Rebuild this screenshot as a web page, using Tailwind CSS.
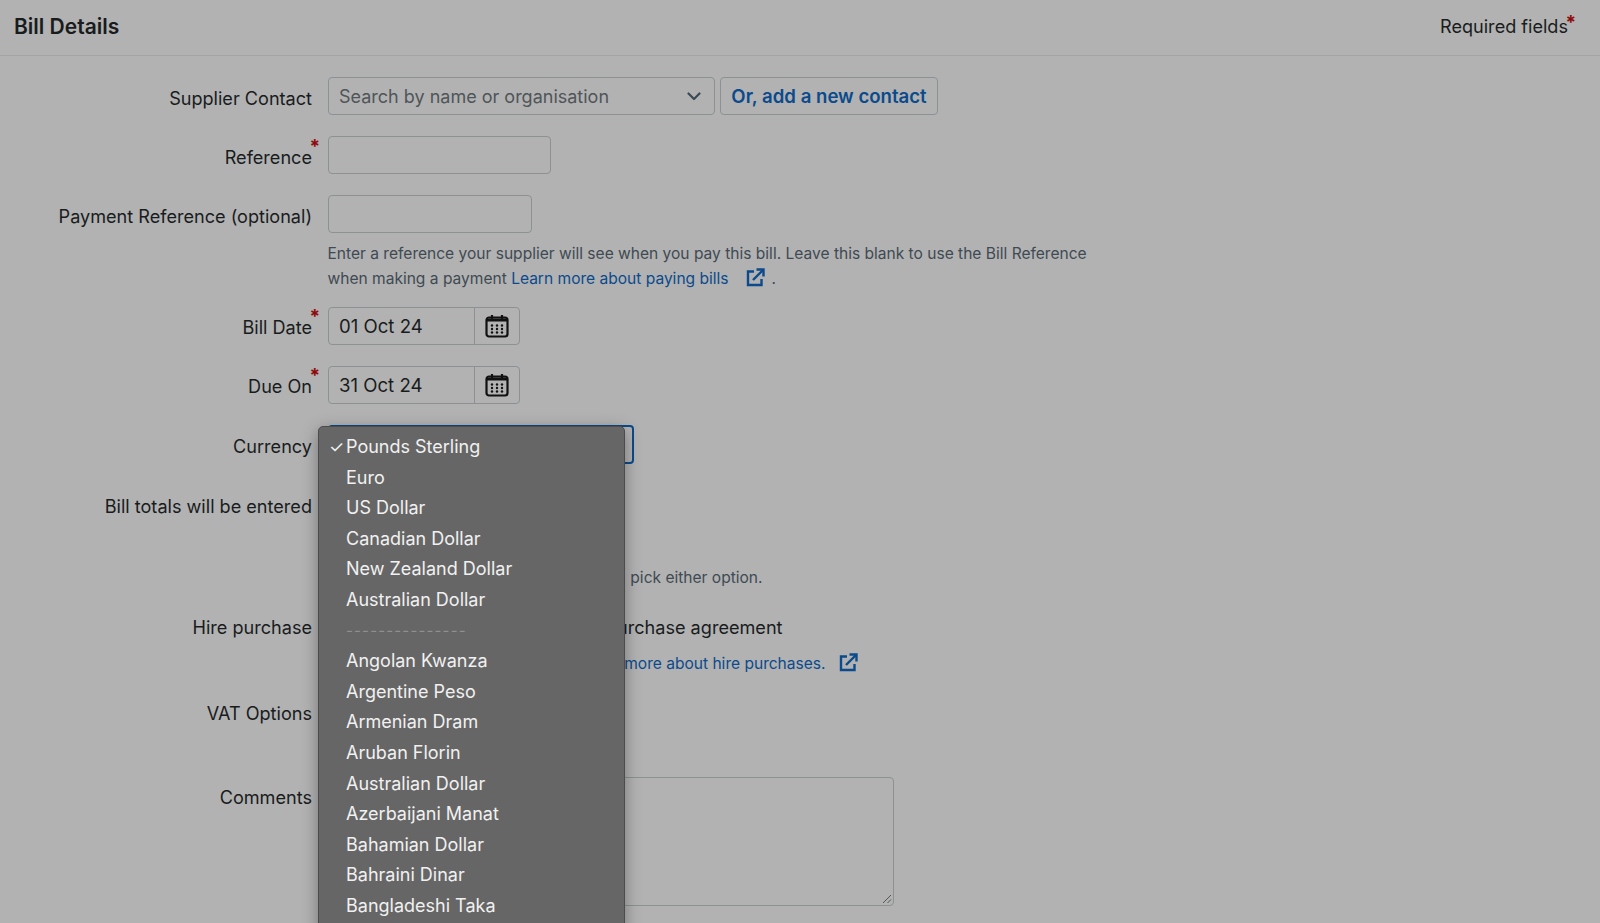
<!DOCTYPE html>
<html lang="en">
<head>
<meta charset="utf-8">
<title>Bill Details</title>
<script src="https://cdn.jsdelivr.net/npm/@tailwindcss/browser@4"></script>
</head>
<body class="bg-[#b2b2b2] overflow-hidden">
<div class="relative w-[1600px] h-[923px] overflow-hidden font-['Inter',sans-serif] text-[#191c1d] text-[18.1px]">
  <header class="h-[56px] flex items-center justify-between border-b border-[#a4a4a4] pl-[14px] pr-[32px] pb-[3px]">
    <h1 class="text-[21px] font-semibold pt-[1px]">Bill Details</h1>
    <div class="relative pt-[1px]">Required fields<span class="absolute -right-[8px] -top-[3px] text-[#8f0a0a] font-bold text-[19px]">*</span></div>
  </header>

  <div class="pt-[21px] flex flex-col">
    <div class="flex h-[38px] mb-[21px]">
      <label class="w-[312px] text-right leading-[38px] pt-[2px]">Supplier Contact</label>
      <div class="ml-[15.5px] flex gap-[5.5px]">
        <div class="w-[387px] h-[38px] border border-[#8c9194] rounded-[4px] flex items-center justify-between pl-[10.5px] pr-[13px] text-[18px] text-[#4f5558]">
          <span>Search by name or organisation</span>
          <svg class="w-[14px] h-[9px]" viewBox="0 0 14 9" fill="none" stroke="#3c4a55" stroke-width="2.2" stroke-linecap="round" stroke-linejoin="round"><path d="M1.5 1.5 7 7l5.5-5.5"/></svg>
        </div>
        <button class="w-[218px] h-[38px] border border-[#8c9194] rounded-[4px] text-[#0b4a8c] text-[18.6px] font-semibold pt-[1px]">Or, add a new contact</button>
      </div>
    </div>

    <div class="flex h-[38px] mb-[21px]">
      <label class="relative w-[312px] text-right leading-[38px] pt-[2px]">Reference<span class="absolute -right-[8px] -top-[2px] text-[#8f0a0a] font-bold text-[19px] leading-[26px]">*</span></label>
      <div class="ml-[15.5px] w-[223.5px] h-[38px] border border-[#8c9194] rounded-[4px]"></div>
    </div>

    <div class="flex h-[38px]">
      <label class="w-[312px] text-right leading-[38px] pt-[2px]">Payment Reference (optional)</label>
      <div class="ml-[15.5px] w-[204.5px] h-[38px] border border-[#8c9194] rounded-[4px]"></div>
    </div>
    <div class="ml-[327.5px] mt-[7.5px] mb-[15.5px] text-[15.56px] leading-[25.5px] text-[#3f4a52] h-[51px]">
      <div>Enter a reference your supplier will see when you pay this bill. Leave this blank to use the Bill Reference</div>
      <div class="flex items-center">when making a payment&nbsp;<a class="text-[#0b4a8c]">Learn more about paying bills</a>
        <svg class="w-[19px] h-[19px] ml-[17px] mb-[2px]" viewBox="0 0 19 19" fill="none" stroke="#0b4a8c" stroke-width="2.4"><path d="M8 3.5H2v13.5h13.5V11"/><path d="M7 12 17 2"/><path d="M10.5 1.5h7v7" /></svg>
        <span class="ml-[7px]">.</span>
      </div>
    </div>

    <div class="flex h-[38px] mb-[21px]">
      <label class="relative w-[312px] text-right leading-[38px] pt-[1px]">Bill Date<span class="absolute -right-[8px] -top-[3px] text-[#8f0a0a] font-bold text-[19px] leading-[26px]">*</span></label>
      <div class="ml-[15.5px] w-[192.5px] h-[38px] border border-[#8c9194] rounded-[4px] flex items-center">
        <span class="w-[146px] pl-[10.5px] pt-[1px] border-r border-[#8c9194] h-full flex items-center text-[18.6px]">01 Oct 24</span>
        <svg class="ml-[10.5px] w-[24px] h-[24px]" viewBox="0 0 24 24" fill="none" stroke="#111"><rect x="1.5" y="3.5" width="21" height="19" rx="2.5" stroke-width="2.2"/><path d="M2 6h20" stroke-width="3"/><path d="M7 1v4M17 1v4" stroke-width="2.2"/><g fill="#111" stroke="none"><circle cx="7" cy="11.5" r="1.2"/><circle cx="12" cy="11.5" r="1.2"/><circle cx="17" cy="11.5" r="1.2"/><circle cx="7" cy="15" r="1.2"/><circle cx="12" cy="15" r="1.2"/><circle cx="17" cy="15" r="1.2"/><circle cx="7" cy="18.5" r="1.2"/><circle cx="12" cy="18.5" r="1.2"/><circle cx="17" cy="18.5" r="1.2"/></g></svg>
      </div>
    </div>

    <div class="flex h-[38px] mb-[21px]">
      <label class="relative w-[312px] text-right leading-[38px] pt-[1px]">Due On<span class="absolute -right-[8px] -top-[3px] text-[#8f0a0a] font-bold text-[19px] leading-[26px]">*</span></label>
      <div class="ml-[15.5px] w-[192.5px] h-[38px] border border-[#8c9194] rounded-[4px] flex items-center">
        <span class="w-[146px] pl-[10.5px] pt-[1px] border-r border-[#8c9194] h-full flex items-center text-[18.6px]">31 Oct 24</span>
        <svg class="ml-[10.5px] w-[24px] h-[24px]" viewBox="0 0 24 24" fill="none" stroke="#111"><rect x="1.5" y="3.5" width="21" height="19" rx="2.5" stroke-width="2.2"/><path d="M2 6h20" stroke-width="3"/><path d="M7 1v4M17 1v4" stroke-width="2.2"/><g fill="#111" stroke="none"><circle cx="7" cy="11.5" r="1.2"/><circle cx="12" cy="11.5" r="1.2"/><circle cx="17" cy="11.5" r="1.2"/><circle cx="7" cy="15" r="1.2"/><circle cx="12" cy="15" r="1.2"/><circle cx="17" cy="15" r="1.2"/><circle cx="7" cy="18.5" r="1.2"/><circle cx="12" cy="18.5" r="1.2"/><circle cx="17" cy="18.5" r="1.2"/></g></svg>
      </div>
    </div>

    <div class="flex h-[38px] mb-[22px]">
      <label class="w-[312px] text-right leading-[38px] pt-[2px]">Currency</label>
      <div class="ml-[15.5px] w-[306px] h-[39px] border-2 border-[#0b4a8c] rounded-[4px]"></div>
    </div>

    <div class="flex h-[38px] mb-[41.6px]">
      <label class="w-[312px] text-right leading-[38px] pt-[2px]">Bill totals will be entered</label>
    </div>

    <div class="ml-[327.5px] w-[435px] h-[26px] mb-[24px] flex justify-end items-center text-[15.56px] text-[#3f4a52] whitespace-nowrap">pick either option.</div>

    <div class="flex h-[26px] mb-[10px]">
      <label class="w-[312px] text-right leading-[24px]">Hire purchase</label>
      <div class="ml-[15.5px] w-[455px] flex justify-end whitespace-nowrap leading-[24px]">a hire purchase agreement</div>
    </div>
    <div class="ml-[327.5px] w-[530px] h-[26px] mb-[24px] flex justify-end items-center text-[15.56px] text-[#0b4a8c] whitespace-nowrap">
      Learn more about hire purchases.
      <svg class="w-[19px] h-[19px] ml-[13px] mb-[2px]" viewBox="0 0 19 19" fill="none" stroke="#0b4a8c" stroke-width="2.4"><path d="M8 3.5H2v13.5h13.5V11"/><path d="M7 12 17 2"/><path d="M10.5 1.5h7v7"/></svg>
    </div>

    <div class="flex h-[26px] mb-[51px]">
      <label class="w-[312px] text-right leading-[24px]">VAT Options</label>
    </div>

    <div class="flex">
      <label class="w-[312px] text-right leading-[26px] mt-[6px]">Comments</label>
      <div class="relative ml-[15.5px] -mt-[1px] w-[566px] h-[129px] border border-[#8c9194] rounded-[4px]">
        <svg class="absolute right-[1px] bottom-[1px] w-[10px] h-[10px]" viewBox="0 0 10 10" fill="none" stroke="#555" stroke-width="1"><path d="M1 9 9 1M5.5 9 9 5.5"/></svg>
      </div>
    </div>
  </div>

  <div class="absolute left-[318px] top-[426px] w-[307px] h-[520px] bg-[#666666] rounded-t-[5px] border border-[#4c4c4c] shadow-[0_4px_16px_rgba(0,0,0,0.35)] pt-[5px] text-[18px] text-[#f1f1f1]">
    <ul class="flex flex-col">
      <li class="relative h-[30.6px] leading-[30.6px] pl-[27px]"><span class="absolute left-[10px] top-0 text-[17px]">✓</span>Pounds Sterling</li>
      <li class="h-[30.6px] leading-[30.6px] pl-[27px]">Euro</li>
      <li class="h-[30.6px] leading-[30.6px] pl-[27px]">US Dollar</li>
      <li class="h-[30.6px] leading-[30.6px] pl-[27px]">Canadian Dollar</li>
      <li class="h-[30.6px] leading-[30.6px] pl-[27px]">New Zealand Dollar</li>
      <li class="h-[30.6px] leading-[30.6px] pl-[27px]">Australian Dollar</li>
      <li class="h-[30.6px] leading-[30.6px] pl-[27px] text-[#8f8f8f] text-[15px] tracking-[1.15px]">---------------</li>
      <li class="h-[30.6px] leading-[30.6px] pl-[27px]">Angolan Kwanza</li>
      <li class="h-[30.6px] leading-[30.6px] pl-[27px]">Argentine Peso</li>
      <li class="h-[30.6px] leading-[30.6px] pl-[27px]">Armenian Dram</li>
      <li class="h-[30.6px] leading-[30.6px] pl-[27px]">Aruban Florin</li>
      <li class="h-[30.6px] leading-[30.6px] pl-[27px]">Australian Dollar</li>
      <li class="h-[30.6px] leading-[30.6px] pl-[27px]">Azerbaijani Manat</li>
      <li class="h-[30.6px] leading-[30.6px] pl-[27px]">Bahamian Dollar</li>
      <li class="h-[30.6px] leading-[30.6px] pl-[27px]">Bahraini Dinar</li>
      <li class="h-[30.6px] leading-[30.6px] pl-[27px]">Bangladeshi Taka</li>
    </ul>
  </div>
</div>
</body>
</html>
